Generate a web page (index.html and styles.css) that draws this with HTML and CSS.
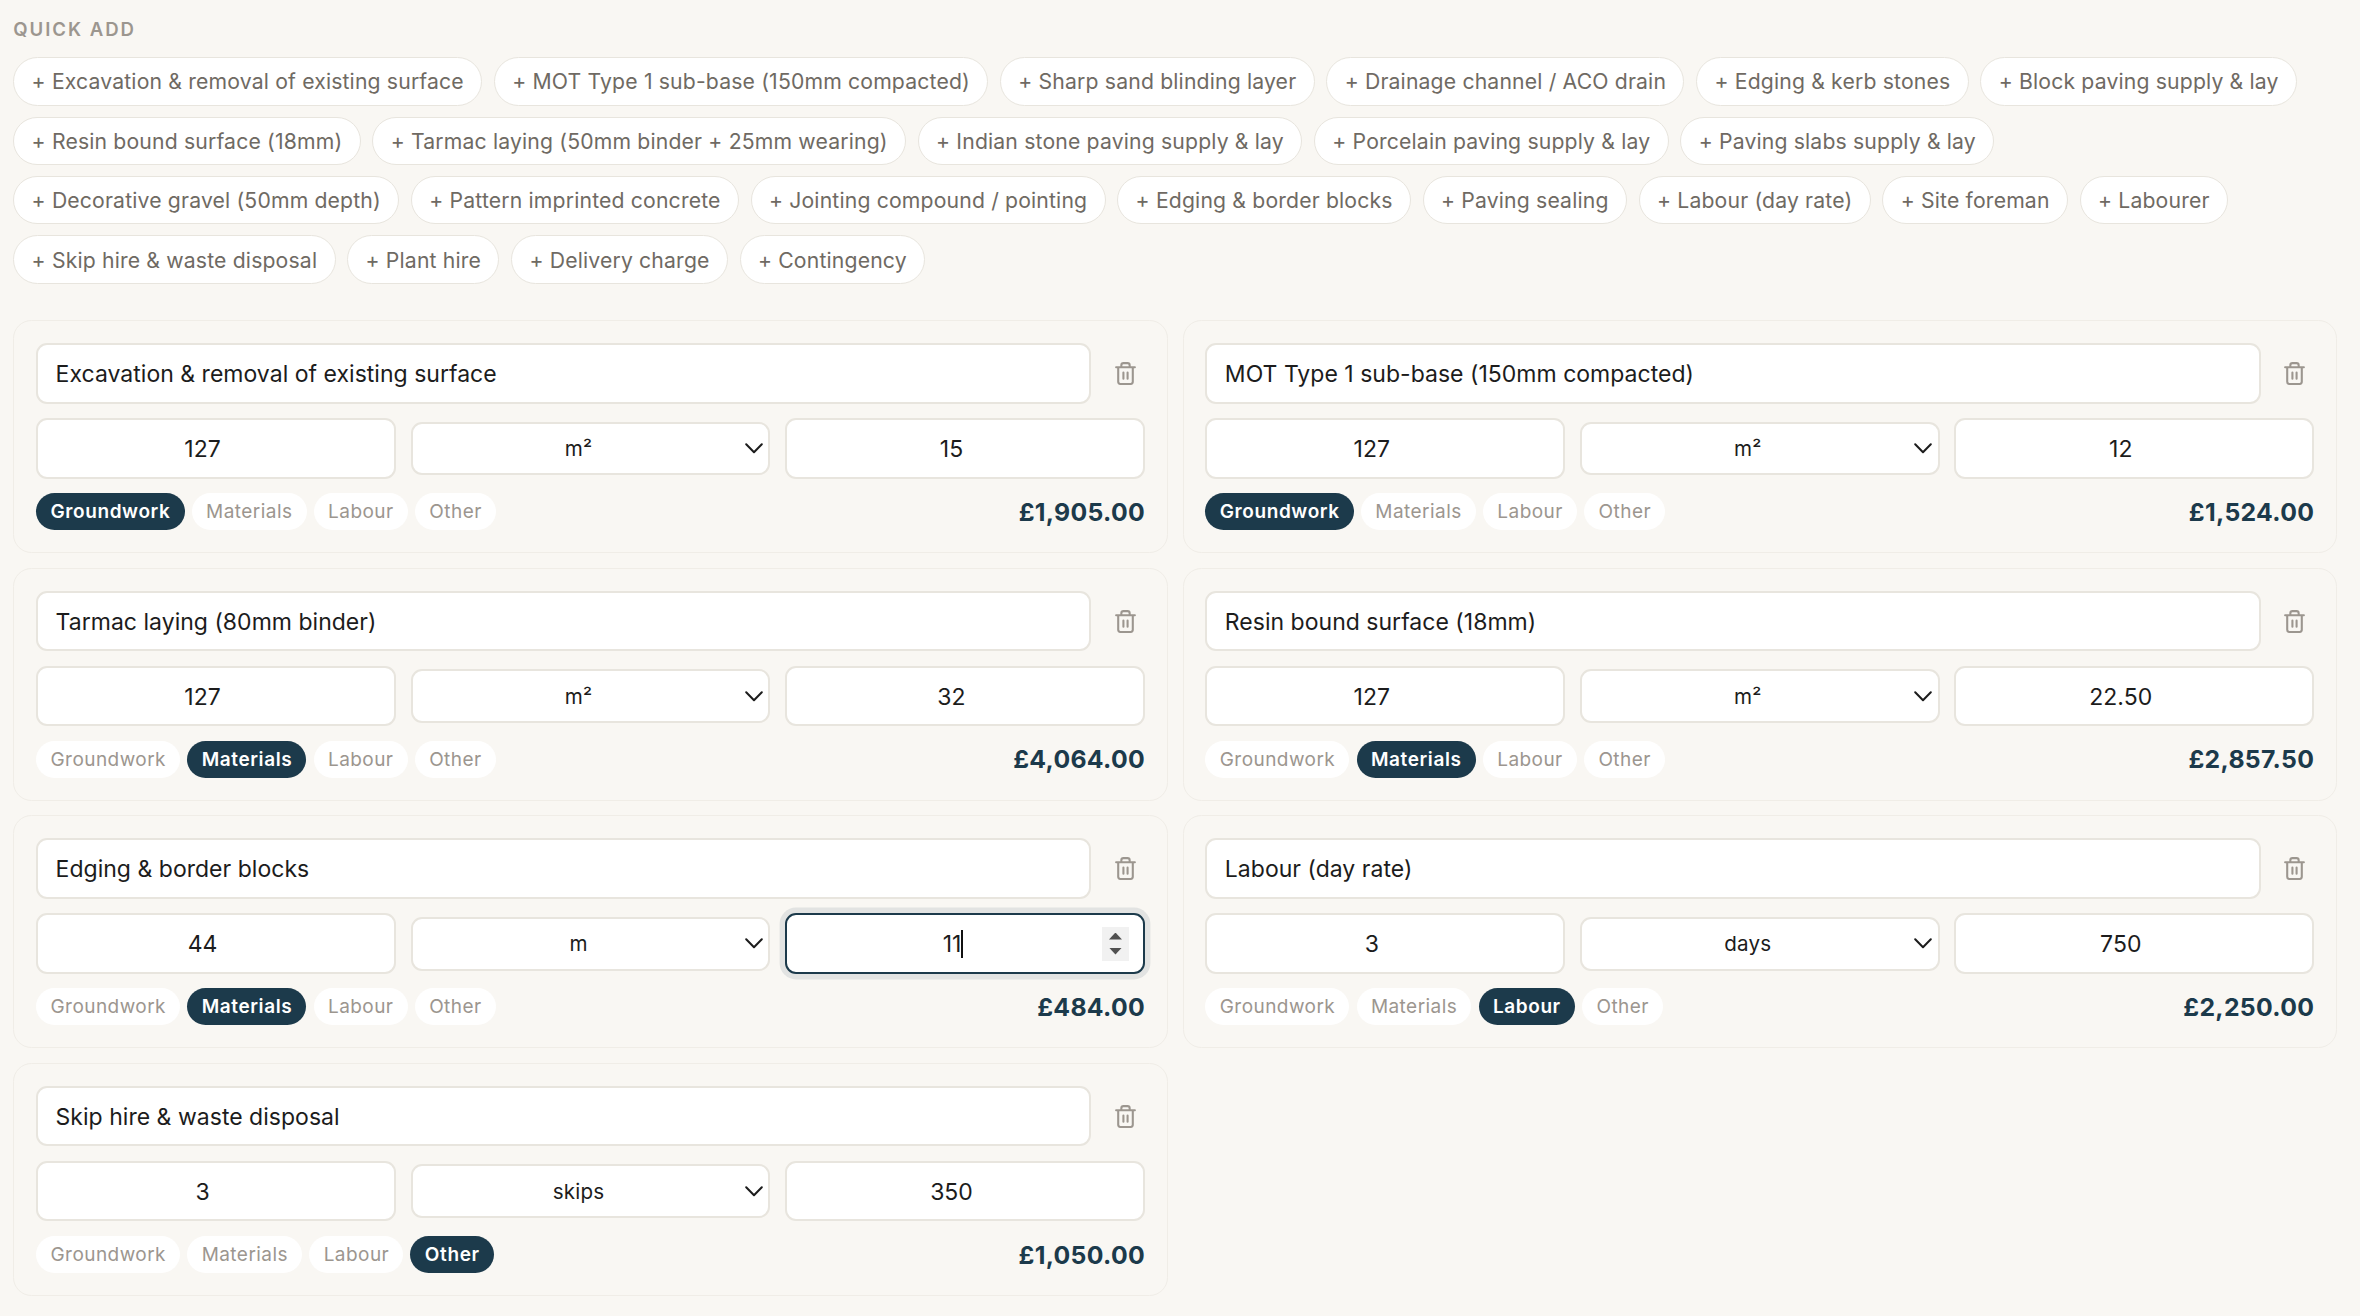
FILE: index.html
```html
<!DOCTYPE html>
<html lang="en">
<head>
<meta charset="utf-8">
<title>Quote items</title>
<link rel="stylesheet" href="styles.css">
</head>
<body>
<svg class="sprite" aria-hidden="true">
  <symbol id="trash" viewBox="0 0 24 24"><path d="M3 6h18M19 6v14a2 2 0 0 1-2 2H7a2 2 0 0 1-2-2V6M8 6V4a2 2 0 0 1 2-2h4a2 2 0 0 1 2 2v2M10 11v6M14 11v6"/></symbol>
  <symbol id="chevron" viewBox="0 0 18 11"><path d="M1.2 1.2 9 9.2l7.8-8"/></symbol>
</svg>
<main class="page">
  <h2 class="heading">QUICK ADD</h2>
  <div class="chips">
    <button class="chip">+ Excavation &amp; removal of existing surface</button>
    <button class="chip">+ MOT Type 1 sub-base (150mm compacted)</button>
    <button class="chip">+ Sharp sand blinding layer</button>
    <button class="chip">+ Drainage channel / ACO drain</button>
    <button class="chip">+ Edging &amp; kerb stones</button>
    <button class="chip">+ Block paving supply &amp; lay</button>
    <button class="chip">+ Resin bound surface (18mm)</button>
    <button class="chip">+ Tarmac laying (50mm binder + 25mm wearing)</button>
    <button class="chip">+ Indian stone paving supply &amp; lay</button>
    <button class="chip">+ Porcelain paving supply &amp; lay</button>
    <button class="chip">+ Paving slabs supply &amp; lay</button>
    <button class="chip">+ Decorative gravel (50mm depth)</button>
    <button class="chip">+ Pattern imprinted concrete</button>
    <button class="chip">+ Jointing compound / pointing</button>
    <button class="chip">+ Edging &amp; border blocks</button>
    <button class="chip">+ Paving sealing</button>
    <button class="chip">+ Labour (day rate)</button>
    <button class="chip">+ Site foreman</button>
    <button class="chip">+ Labourer</button>
    <button class="chip">+ Skip hire &amp; waste disposal</button>
    <button class="chip">+ Plant hire</button>
    <button class="chip">+ Delivery charge</button>
    <button class="chip">+ Contingency</button>
  </div>

  <div class="cards">
    <section class="card">
      <div class="row"><div class="field name">Excavation &amp; removal of existing surface</div><button class="delete" aria-label="Delete"><svg><use href="#trash"/></svg></button></div>
      <div class="values"><div class="field number">127</div><div class="field select"><span>m²</span><svg><use href="#chevron"/></svg></div><div class="field number">15</div></div>
      <div class="foot"><div class="tags"><button class="tag on">Groundwork</button><button class="tag">Materials</button><button class="tag">Labour</button><button class="tag">Other</button></div><div class="total">£1,905.00</div></div>
    </section>
    <section class="card">
      <div class="row"><div class="field name">MOT Type 1 sub-base (150mm compacted)</div><button class="delete" aria-label="Delete"><svg><use href="#trash"/></svg></button></div>
      <div class="values"><div class="field number">127</div><div class="field select"><span>m²</span><svg><use href="#chevron"/></svg></div><div class="field number">12</div></div>
      <div class="foot"><div class="tags"><button class="tag on">Groundwork</button><button class="tag">Materials</button><button class="tag">Labour</button><button class="tag">Other</button></div><div class="total">£1,524.00</div></div>
    </section>
    <section class="card">
      <div class="row"><div class="field name">Tarmac laying (80mm binder)</div><button class="delete" aria-label="Delete"><svg><use href="#trash"/></svg></button></div>
      <div class="values"><div class="field number">127</div><div class="field select"><span>m²</span><svg><use href="#chevron"/></svg></div><div class="field number">32</div></div>
      <div class="foot"><div class="tags"><button class="tag">Groundwork</button><button class="tag on">Materials</button><button class="tag">Labour</button><button class="tag">Other</button></div><div class="total">£4,064.00</div></div>
    </section>
    <section class="card">
      <div class="row"><div class="field name">Resin bound surface (18mm)</div><button class="delete" aria-label="Delete"><svg><use href="#trash"/></svg></button></div>
      <div class="values"><div class="field number">127</div><div class="field select"><span>m²</span><svg><use href="#chevron"/></svg></div><div class="field number">22.50</div></div>
      <div class="foot"><div class="tags"><button class="tag">Groundwork</button><button class="tag on">Materials</button><button class="tag">Labour</button><button class="tag">Other</button></div><div class="total">£2,857.50</div></div>
    </section>
    <section class="card">
      <div class="row"><div class="field name">Edging &amp; border blocks</div><button class="delete" aria-label="Delete"><svg><use href="#trash"/></svg></button></div>
      <div class="values"><div class="field number">44</div><div class="field select"><span>m</span><svg><use href="#chevron"/></svg></div><div class="field number focused"><span class="typed">11</span><span class="spinner"><i class="up"></i><i class="down"></i></span></div></div>
      <div class="foot"><div class="tags"><button class="tag">Groundwork</button><button class="tag on">Materials</button><button class="tag">Labour</button><button class="tag">Other</button></div><div class="total">£484.00</div></div>
    </section>
    <section class="card">
      <div class="row"><div class="field name">Labour (day rate)</div><button class="delete" aria-label="Delete"><svg><use href="#trash"/></svg></button></div>
      <div class="values"><div class="field number">3</div><div class="field select"><span>days</span><svg><use href="#chevron"/></svg></div><div class="field number">750</div></div>
      <div class="foot"><div class="tags"><button class="tag">Groundwork</button><button class="tag">Materials</button><button class="tag on">Labour</button><button class="tag">Other</button></div><div class="total">£2,250.00</div></div>
    </section>
    <section class="card">
      <div class="row"><div class="field name">Skip hire &amp; waste disposal</div><button class="delete" aria-label="Delete"><svg><use href="#trash"/></svg></button></div>
      <div class="values"><div class="field number">3</div><div class="field select"><span>skips</span><svg><use href="#chevron"/></svg></div><div class="field number">350</div></div>
      <div class="foot"><div class="tags"><button class="tag">Groundwork</button><button class="tag">Materials</button><button class="tag">Labour</button><button class="tag on">Other</button></div><div class="total">£1,050.00</div></div>
    </section>
  </div>
</main>
</body>
</html>
```
FILE: styles.css
```css
:root {
  --bg: #f9f7f3;
  --line: #e8e5de;
  --faint: #f0ede7;
  --navy: #1c3a4b;
  --ink: #1c1c1c;
  --text: #6f6a63;
  --muted: #9c968f;
}

* { box-sizing: border-box; }

body {
  margin: 0;
  height: 1316px;
  overflow: hidden;
  background: var(--bg);
  color: var(--ink);
  font-family: Inter, "Liberation Sans", sans-serif;
}

button {
  margin: 0;
  border: 0;
  font: inherit;
  cursor: pointer;
}

.sprite { display: none; }

.page { padding: 17.3px 23px 0 13.3px; }

.heading {
  margin: 0 0 16px;
  height: 24px;
  line-height: 24px;
  font-size: 18.6px;
  font-weight: 600;
  letter-spacing: 1.95px;
  color: var(--muted);
}

.chips {
  display: flex;
  flex-wrap: wrap;
  gap: 11px 11.7px;
}

.chip {
  height: 48.4px;
  padding: 0 17.4px 0 17.3px;
  border: 1px solid var(--line);
  border-radius: 25px;
  background: #fff;
  color: var(--text);
  font-size: 21.2px;
  letter-spacing: 0.16px;
  line-height: 46px;
  white-space: nowrap;
}

.cards {
  display: grid;
  grid-template-columns: 1fr 1fr;
  gap: 14.8px;
  margin-top: 36.4px;
}

.card {
  display: flex;
  flex-direction: column;
  gap: 14.6px;
  height: 232.8px;
  padding: 22px 21.8px;
  border: 1px solid var(--faint);
  border-radius: 18.5px;
}

.row {
  display: flex;
  gap: 15px;
}

.field {
  display: flex;
  align-items: center;
  height: 60.4px;
  padding-top: 1px;
  border: 2px solid var(--line);
  border-radius: 11px;
  background: #fff;
  font-size: 23px;
  letter-spacing: 0.02px;
  white-space: nowrap;
}

.name {
  flex: 1;
  padding-left: 17.5px;
  padding-right: 17.5px;
}

.delete {
  display: flex;
  align-items: center;
  justify-content: center;
  width: 38.5px;
  padding: 0;
  background: none;
  color: var(--muted);
}

.delete svg {
  width: 25px;
  height: 25px;
  overflow: visible;
  fill: none;
  stroke: currentColor;
  stroke-width: 2;
  stroke-linecap: round;
  stroke-linejoin: round;
}

.values {
  display: grid;
  grid-template-columns: repeat(3, 1fr);
  align-items: center;
  gap: 14.6px;
}

.number {
  justify-content: center;
  padding-right: 27px;
}

.select {
  height: 53.8px;
  padding: 0 5.8px 0 0;
  font-size: 20.6px;
  letter-spacing: 0.2px;
}

.select span {
  flex: 1;
  text-align: center;
}

.select svg {
  width: 18px;
  height: 11px;
  fill: none;
  stroke: var(--ink);
  stroke-width: 2;
  stroke-linecap: round;
  stroke-linejoin: round;
}

.focused {
  padding: 0 14px 0 15px;
  border-color: var(--navy);
  box-shadow: 0 0 0 5.4px rgba(28, 58, 75, 0.1);
}

.typed {
  flex: 1;
  height: 28px;
  line-height: 28px;
  text-align: center;
}

.typed::after {
  content: "";
  display: inline-block;
  width: 2px;
  height: 28px;
  margin-right: -2px;
  background: #111;
  vertical-align: top;
}

.spinner {
  display: flex;
  flex-direction: column;
  align-items: center;
  justify-content: center;
  gap: 8px;
  width: 27px;
  height: 34px;
  background: #f1f1f1;
}

.spinner i {
  width: 13px;
  height: 7px;
  background: #505050;
}

.up { clip-path: polygon(50% 0, 100% 100%, 0 100%); }
.down { clip-path: polygon(0 0, 100% 0, 50% 100%); }

.foot {
  display: flex;
  align-items: center;
  justify-content: space-between;
  height: 37px;
}

.tags {
  display: flex;
  gap: 7.2px;
}

.tag {
  height: 37px;
  padding: 1px 14.1px 0 14.4px;
  border-radius: 19px;
  background: #fff;
  color: var(--muted);
  font-size: 19px;
  letter-spacing: 0.45px;
  line-height: 36px;
}

.tag.on {
  background: var(--navy);
  color: #fff;
  font-weight: 600;
  letter-spacing: 0.6px;
}

.total {
  color: var(--navy);
  font-size: 24.8px;
  font-weight: 700;
  letter-spacing: 0.3px;
}
```
